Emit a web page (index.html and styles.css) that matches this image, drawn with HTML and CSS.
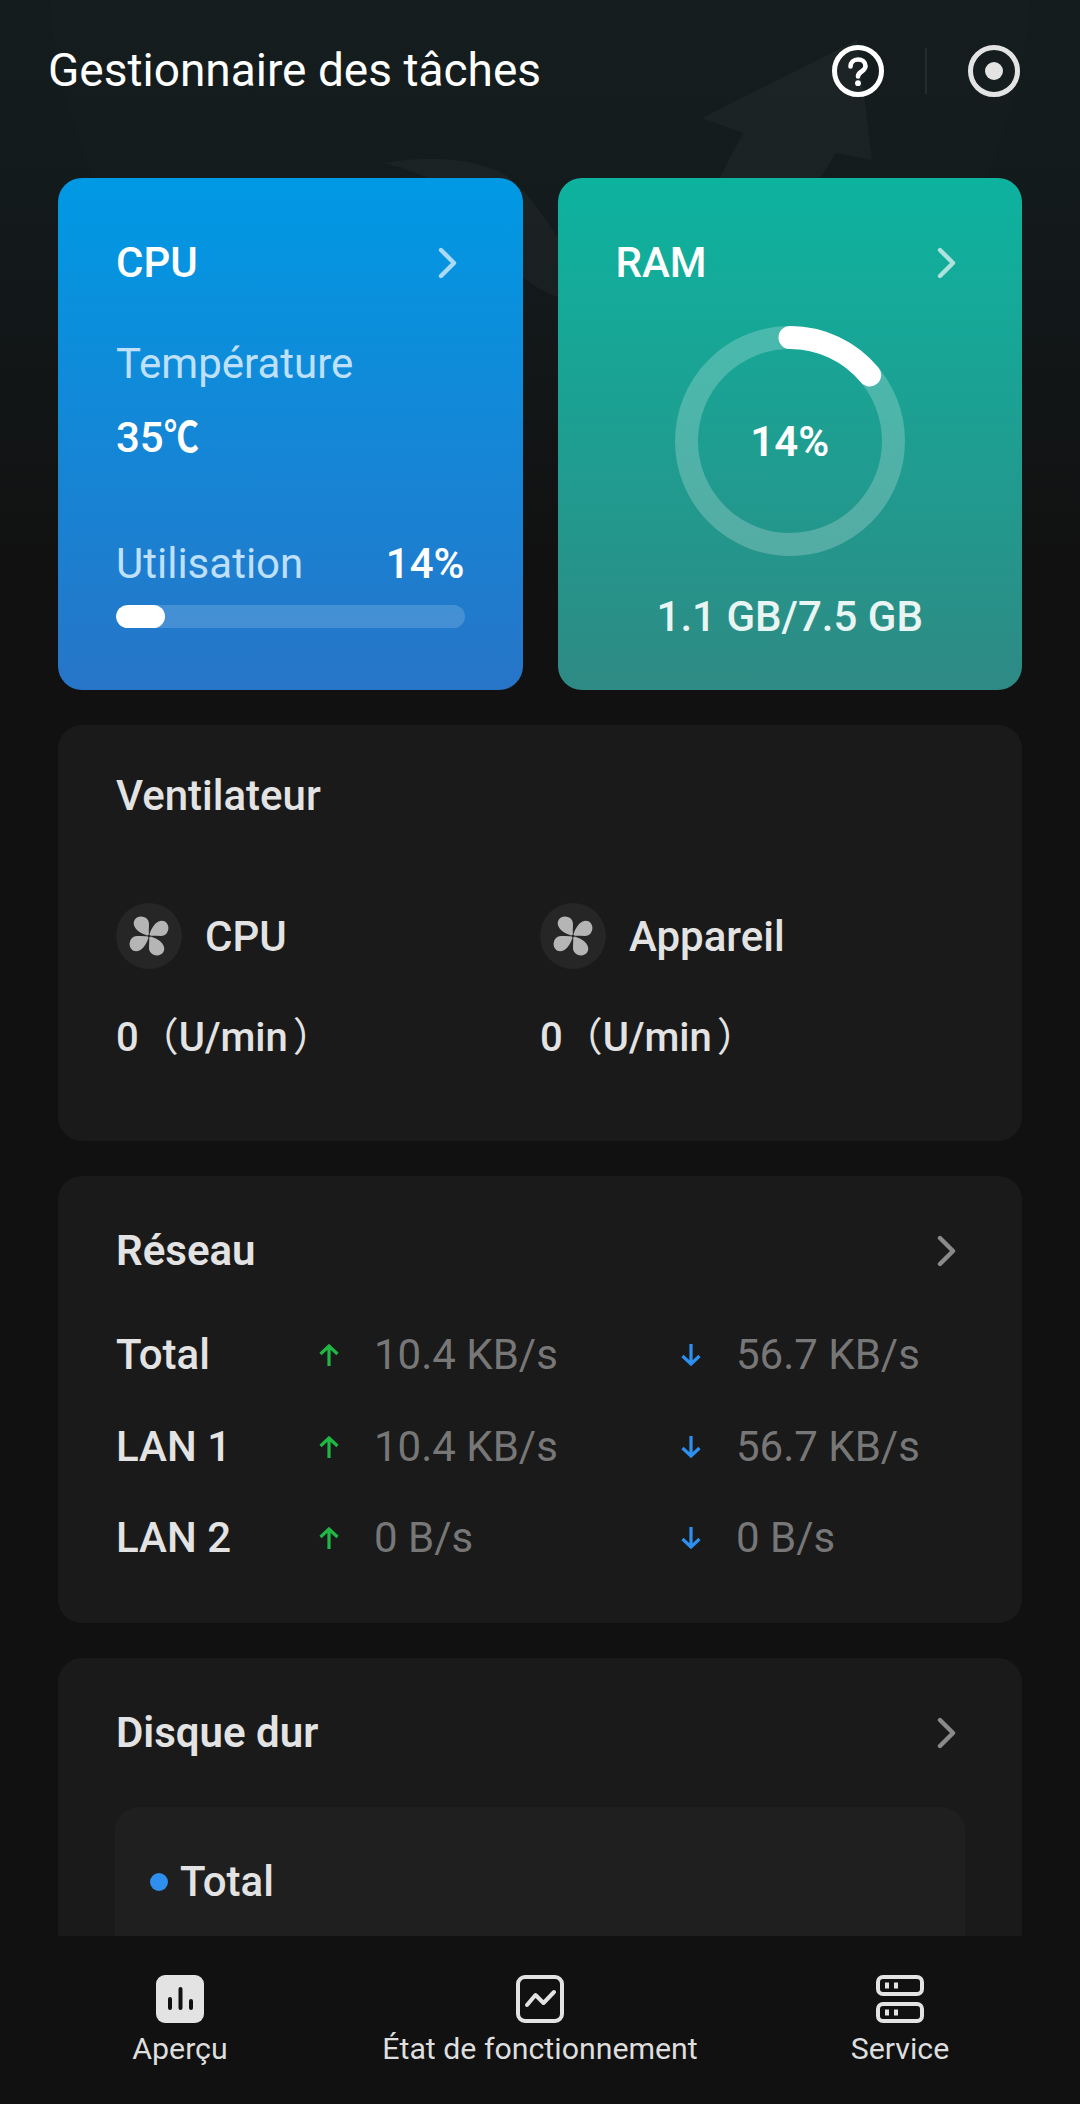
FILE: index.html
```html
<!DOCTYPE html>
<html lang="fr">
<head>
<meta charset="utf-8">
<title>Gestionnaire des tâches</title>
<link rel="stylesheet" href="styles.css">
</head>
<body>
<div class="app">
  <svg class="watermark" width="1080" height="420" viewBox="0 0 1080 420" aria-hidden="true">
    <circle class="wm-ring" cx="540" cy="-30" r="490"/>
    <path class="wm-shape" d="M857 40 L702 118 L743 133 L677 260 L769 260 L836 153 L872 160 Z"/>
    <path class="wm-shape" d="M383 163 C430 155 470 158 500 172 C525 185 545 220 560 240 L560 298 C545 292 530 285 515 270 L470 210 C450 185 420 172 383 163 Z"/>
  </svg>

  <header class="top">
    <h1 class="title">Gestionnaire des tâches</h1>
    <div class="top-actions">
      <svg class="ico-52" viewBox="0 0 52 52" aria-hidden="true">
        <circle cx="26" cy="26" r="23.5" fill="none" stroke="#fff" stroke-width="5"/>
        <path d="M18.5 21.5c0-4.200 3.300-7 7.500-7s7.500 2.700 7.500 6.600c0 5.500-7.500 5.300-7.500 10.400" fill="none" stroke="#fff" stroke-width="4.600" stroke-linecap="round"/>
        <circle cx="26" cy="38.200" r="2.900" fill="#fff"/>
      </svg>
      <span class="top-sep"></span>
      <svg class="ico-52" viewBox="0 0 52 52" aria-hidden="true">
        <circle cx="26" cy="26" r="23.5" fill="none" stroke="#e3e3e3" stroke-width="5"/>
        <circle cx="26" cy="26" r="9" fill="#e3e3e3"/>
      </svg>
    </div>
  </header>

  <main class="scroll">
    <section class="duo">
      <article class="tile tile-cpu">
        <div class="row-between">
          <h2 class="tile-title">CPU</h2>
          <svg class="chev chev-light" viewBox="0 0 20 32" aria-hidden="true"><path d="M3 3 L16 16 L3 29"/></svg>
        </div>
        <p class="soft temp-label">Température</p>
        <p class="strong temp-value">35<span class="deg">℃</span></p>
        <div class="row-between usage-row">
          <span class="soft">Utilisation</span>
          <span class="strong">14%</span>
        </div>
        <div class="bar"><div class="bar-fill" style="width:14%"></div></div>
      </article>

      <article class="tile tile-ram">
        <div class="row-between">
          <h2 class="tile-title">RAM</h2>
          <svg class="chev chev-light" viewBox="0 0 20 32" aria-hidden="true"><path d="M3 3 L16 16 L3 29"/></svg>
        </div>
        <div class="ring">
          <svg width="230" height="230" viewBox="0 0 230 230" aria-hidden="true">
            <circle class="ring-track" cx="115" cy="115" r="103.5"/>
            <path class="ring-value" d="M115 11.5 A103.5 103.5 0 0 1 194.7 49"/>
          </svg>
          <span class="ring-label">14%</span>
        </div>
        <p class="ram-usage">1.1 GB/7.5 GB</p>
      </article>
    </section>

    <section class="panel panel-fan">
      <h2 class="panel-title medium">Ventilateur</h2>
      <div class="fans">
        <div class="fan">
          <div class="fan-head">
            <span class="fan-badge">
              <svg width="40" height="40" viewBox="0 0 40 40" aria-hidden="true">
                <g fill="#b5b5b5">
                  <path d="M20 20C16 19 8 16 5.500 10.500C3 5 7 .5 12 .6C17 .8 20 4 20 8C20 12 19.500 16 20 20Z"/>
                  <path transform="rotate(90 20 20)" d="M20 20C16 19 8 16 5.500 10.500C3 5 7 .5 12 .6C17 .8 20 4 20 8C20 12 19.500 16 20 20Z"/>
                  <path transform="rotate(180 20 20)" d="M20 20C16 19 8 16 5.500 10.500C3 5 7 .5 12 .6C17 .8 20 4 20 8C20 12 19.500 16 20 20Z"/>
                  <path transform="rotate(270 20 20)" d="M20 20C16 19 8 16 5.500 10.500C3 5 7 .5 12 .6C17 .8 20 4 20 8C20 12 19.500 16 20 20Z"/>
                </g>
                <circle cx="20" cy="20" r="1.500" fill="#262626"/>
              </svg>
            </span>
            <span class="fan-name">CPU</span>
          </div>
          <p class="fan-value">0<span class="paren">（</span>U/min<span class="paren paren-end">）</span></p>
        </div>
        <div class="fan">
          <div class="fan-head">
            <span class="fan-badge">
              <svg width="40" height="40" viewBox="0 0 40 40" aria-hidden="true">
                <g fill="#b5b5b5">
                  <path d="M20 20C16 19 8 16 5.500 10.500C3 5 7 .5 12 .6C17 .8 20 4 20 8C20 12 19.500 16 20 20Z"/>
                  <path transform="rotate(90 20 20)" d="M20 20C16 19 8 16 5.500 10.500C3 5 7 .5 12 .6C17 .8 20 4 20 8C20 12 19.500 16 20 20Z"/>
                  <path transform="rotate(180 20 20)" d="M20 20C16 19 8 16 5.500 10.500C3 5 7 .5 12 .6C17 .8 20 4 20 8C20 12 19.500 16 20 20Z"/>
                  <path transform="rotate(270 20 20)" d="M20 20C16 19 8 16 5.500 10.500C3 5 7 .5 12 .6C17 .8 20 4 20 8C20 12 19.500 16 20 20Z"/>
                </g>
                <circle cx="20" cy="20" r="1.500" fill="#262626"/>
              </svg>
            </span>
            <span class="fan-name">Appareil</span>
          </div>
          <p class="fan-value">0<span class="paren">（</span>U/min<span class="paren paren-end">）</span></p>
        </div>
      </div>
    </section>

    <section class="panel panel-net">
      <div class="row-between">
        <h2 class="panel-title">Réseau</h2>
        <svg class="chev chev-grey" viewBox="0 0 20 32" aria-hidden="true"><path d="M3 3 L16 16 L3 29"/></svg>
      </div>
      <div class="net-table">
        <div class="net-row">
          <span class="net-name">Total</span>
          <svg class="arrow arrow-up" viewBox="0 0 22 22" aria-hidden="true"><path d="M11 22V2M2.500 10L11 2l8.500 8"/></svg>
          <span class="net-val">10.4 KB/s</span>
          <svg class="arrow arrow-down" viewBox="0 0 22 22" aria-hidden="true"><path d="M11 0v20M2.500 12L11 20l8.500-8"/></svg>
          <span class="net-val">56.7 KB/s</span>
        </div>
        <div class="net-row">
          <span class="net-name">LAN 1</span>
          <svg class="arrow arrow-up" viewBox="0 0 22 22" aria-hidden="true"><path d="M11 22V2M2.500 10L11 2l8.500 8"/></svg>
          <span class="net-val">10.4 KB/s</span>
          <svg class="arrow arrow-down" viewBox="0 0 22 22" aria-hidden="true"><path d="M11 0v20M2.500 12L11 20l8.500-8"/></svg>
          <span class="net-val">56.7 KB/s</span>
        </div>
        <div class="net-row">
          <span class="net-name">LAN 2</span>
          <svg class="arrow arrow-up" viewBox="0 0 22 22" aria-hidden="true"><path d="M11 22V2M2.500 10L11 2l8.500 8"/></svg>
          <span class="net-val">0 B/s</span>
          <svg class="arrow arrow-down" viewBox="0 0 22 22" aria-hidden="true"><path d="M11 0v20M2.500 12L11 20l8.500-8"/></svg>
          <span class="net-val">0 B/s</span>
        </div>
      </div>
    </section>

    <section class="panel panel-disk">
      <div class="row-between">
        <h2 class="panel-title">Disque dur</h2>
        <svg class="chev chev-grey" viewBox="0 0 20 32" aria-hidden="true"><path d="M3 3 L16 16 L3 29"/></svg>
      </div>
      <div class="disk-box">
        <span class="disk-dot"></span>
        <span class="disk-name">Total</span>
      </div>
    </section>
  </main>

  <nav class="nav">
    <a class="nav-item">
      <svg class="nav-ico" viewBox="0 0 48 48" aria-hidden="true">
        <rect width="48" height="48" rx="9" fill="#e3e3e3"/>
        <g stroke="#111" stroke-width="4" stroke-linecap="round">
          <path d="M14 24v9M24.500 14v19M35 26v7"/>
        </g>
      </svg>
      <span class="nav-label">Aperçu</span>
    </a>
    <a class="nav-item">
      <svg class="nav-ico" viewBox="0 0 48 48" aria-hidden="true">
        <rect x="2" y="2" width="44" height="44" rx="7" fill="none" stroke="#e3e3e3" stroke-width="4"/>
        <path d="M11 30l8.500-10 8 8 10.500-11" fill="none" stroke="#e3e3e3" stroke-width="4" stroke-linecap="round" stroke-linejoin="round"/>
      </svg>
      <span class="nav-label">État de fonctionnement</span>
    </a>
    <a class="nav-item">
      <svg class="nav-ico" viewBox="0 0 48 48" aria-hidden="true">
        <g fill="none" stroke="#e3e3e3" stroke-width="4">
          <rect x="2" y="2" width="44" height="17" rx="5"/>
          <rect x="2" y="29" width="44" height="17" rx="5"/>
        </g>
        <g fill="#e3e3e3">
          <rect x="9" y="7.500" width="4" height="6"/>
          <rect x="18" y="7.500" width="4" height="6"/>
          <rect x="9" y="34.500" width="4" height="6"/>
          <rect x="18" y="34.500" width="4" height="6"/>
        </g>
      </svg>
      <span class="nav-label">Service</span>
    </a>
  </nav>
</div>
</body>
</html>
```

FILE: styles.css
```css
* { box-sizing: border-box; }
html, body { margin: 0; padding: 0; }
body {
  background: #111;
  color: #e3e3e3;
  font-family: Roboto, "Noto Sans CJK SC", sans-serif;
  font-size: 42px;
  line-height: 50px;
}
h1, h2, p { margin: 0; font-weight: 400; }

.app {
  position: relative;
  width: 1080px;
  height: 2104px;
  display: flex;
  flex-direction: column;
  overflow: hidden;
  background: linear-gradient(180deg, #141c1e 0, #131a1c 200px, #111 560px);
}
.watermark { position: absolute; left: 0; top: 0; }
.wm-ring { fill: rgba(255,255,255,.006); stroke: rgba(255,255,255,.012); stroke-width: 1; }
.wm-shape { fill: rgba(255,255,255,.03); }

.top {
  position: relative;
  height: 178px;
  flex: none;
  display: flex;
  justify-content: space-between;
  align-items: flex-start;
  padding: 45px 60px 0 48px;
}
.title { font-size: 46px; line-height: 50px; color: #fff; }
.top-actions { display: flex; align-items: center; gap: 41px; }
.ico-52 { width: 52px; height: 52px; display: block; }
.top-sep { width: 2px; height: 46px; background: rgba(255,255,255,.07); }

.scroll {
  position: relative;
  flex: 1;
  min-height: 0;
  overflow: hidden;
  padding: 0 58px;
  display: flex;
  flex-direction: column;
  gap: 35px;
}

.duo { display: flex; gap: 35px; flex: none; }
.tile {
  width: 465px;
  height: 512px;
  border-radius: 24px;
  padding: 60px 58px 0;
  color: #fff;
  font-weight: 500;
}
.tile-cpu { background: linear-gradient(180deg, #0099e4, #2775c8); }
.tile-ram { background: linear-gradient(180deg, #0db39f, #2e8a84); }
.tile-title { font-size: 42px; font-weight: 500; line-height: 50px; }
.row-between { display: flex; justify-content: space-between; align-items: center; }

.chev { width: 20px; height: 32px; margin-right: 7px; fill: none; stroke-width: 4.4; stroke-linecap: round; stroke-linejoin: round; flex: none; }
.chev-light { stroke: rgba(255,255,255,.66); }
.chev-grey { stroke: #8a8a8a; }

.soft { color: #bfe0fb; font-weight: 400; }
.strong { color: #fff; font-weight: 500; }
.temp-label { margin-top: 51px; }
.temp-value { margin-top: 24px; }
.deg { display: inline-block; width: 35px; font-weight: 700; transform: scaleX(.83); transform-origin: left center; }
.usage-row { margin-top: 76px; }
.bar { margin-top: 16px; height: 23px; border-radius: 12px; background: rgba(255,255,255,.16); overflow: hidden; }
.bar-fill { height: 100%; border-radius: 12px; background: #fff; }

.ring { position: relative; width: 230px; height: 230px; margin: 38px auto 0; }
.ring svg { display: block; }
.ring-track { fill: none; stroke: rgba(255,255,255,.22); stroke-width: 23; }
.ring-value { fill: none; stroke: #fff; stroke-width: 23; stroke-linecap: round; }
.ring-label { position: absolute; left: 0; right: 0; top: 91px; text-align: center; color: #fff; font-weight: 600; }
.ram-usage { margin-top: 36px; text-align: center; color: #e8f5f2; white-space: nowrap; font-weight: 500; }

.panel { background: #1a1a1a; border-radius: 24px; padding: 46px 58px 0; flex: none; }
.panel-title { font-size: 42px; font-weight: 600; line-height: 50px; color: #e3e3e3; }
.panel-title.medium { font-weight: 500; }
.panel-fan { height: 416px; }
.fans { display: flex; margin-top: 82px; }
.fan { width: 425px; }
.fan-head { display: flex; align-items: center; gap: 23px; }
.fan-badge { width: 66px; height: 66px; border-radius: 50%; background: #262626; display: flex; align-items: center; justify-content: center; }
.fan-name { font-weight: 500; padding-top: 2px; }
.fan-value { margin-top: 44px; font-size: 40px; font-weight: 500; }
.paren { font-weight: 400; }
.paren-end { margin-left: 5px; }

.panel-net { height: 447px; padding-top: 50px; }
.net-table { margin-top: 54px; display: flex; flex-direction: column; gap: 41.5px; }
.net-row { display: flex; align-items: center; height: 50px; }
.net-name { width: 202px; font-weight: 500; }
.net-val { color: #777; width: 306px; }
.net-val:last-child { width: auto; }
.arrow { width: 22px; height: 22px; fill: none; stroke-width: 3.2; margin-right: 34px; flex: none; }
.arrow-up { stroke: #1fb845; }
.arrow-down { stroke: #2e8fef; }

.panel-disk { height: 500px; padding-top: 50px; }
.disk-box {
  margin-top: 49px;
  height: 300px;
  margin-right: -1px;
  margin-left: -1px;
  border-radius: 24px;
  background: #1f1f1f;
  padding: 50px 35px 0;
  display: flex;
  align-items: flex-start;
  gap: 12px;
}
.disk-dot { width: 18px; height: 18px; border-radius: 50%; background: #2e8fef; margin-top: 16px; flex: none; }
.disk-name { font-weight: 500; }

.nav {
  position: relative;
  flex: none;
  height: 168px;
  background: #111;
  display: flex;
  padding-top: 39px;
}
.nav-item { width: 360px; display: flex; flex-direction: column; align-items: center; color: #dedede; }
.nav-ico { width: 48px; height: 48px; display: block; }
.nav-label { font-size: 30.3px; line-height: 40px; margin-top: 6px; white-space: nowrap; }
```
